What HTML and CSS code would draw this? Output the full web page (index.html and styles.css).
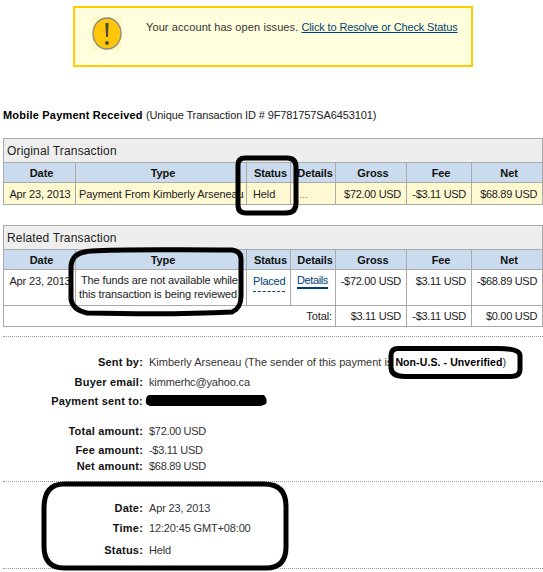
FILE: index.html
```html
<!DOCTYPE html>
<html lang="en">
<head>
<meta charset="utf-8">
<title>Mobile Payment Received</title>
<link rel="stylesheet" href="styles.css">
</head>
<body>
<div class="page">
  <div class="banner">
    <svg class="alert-icon" width="30" height="33" viewBox="0 0 30 33">
      <rect width="30" height="33" fill="#fff7c8"/>
      <ellipse cx="15" cy="16.5" rx="14" ry="15.5" fill="#ffc60a" stroke="#8a8a80" stroke-width="1.3"/>
      <path d="M13.4 6h3.2l-.7 14h-1.8z" fill="#4a4a3a"/>
      <circle cx="15" cy="26" r="1.9" fill="#4a4a3a"/>
    </svg>
    <p class="banner-text">Your account has open issues. <a href="#">Click to Resolve or Check Status</a></p>
  </div>

  <h1 class="title"><b>Mobile Payment Received</b> <span>(Unique Transaction ID # 9F781757SA6453101)</span></h1>

  <table class="txn txn-first">
    <colgroup><col class="c-date"><col class="c-type"><col class="c-status"><col class="c-details"><col class="c-gross"><col class="c-fee"><col class="c-net"></colgroup>
    <tr><th colspan="7" class="caption">Original Transaction</th></tr>
    <tr class="head"><th>Date</th><th>Type</th><th>Status</th><th>Details</th><th>Gross</th><th>Fee</th><th>Net</th></tr>
    <tr class="held">
      <td class="when">Apr 23, 2013</td><td class="left">Payment From Kimberly Arseneau</td><td class="left pad">Held</td><td class="left dots">...</td><td class="money">$72.00 USD</td><td class="money">-$3.11 USD</td><td class="money">$68.89 USD</td>
    </tr>
  </table>

  <table class="txn txn-second">
    <colgroup><col class="c-date"><col class="c-type"><col class="c-status"><col class="c-details"><col class="c-gross"><col class="c-fee"><col class="c-net"></colgroup>
    <tr><th colspan="7" class="caption">Related Transaction</th></tr>
    <tr class="head"><th>Date</th><th>Type</th><th>Status</th><th>Details</th><th>Gross</th><th>Fee</th><th>Net</th></tr>
    <tr class="related">
      <td class="when">Apr 23, 2013</td>
      <td class="left wrap">The funds are not available while<br>this transaction is being reviewed</td>
      <td class="left pad"><span class="placed">Placed</span></td>
      <td class="left link-cell"><a class="details-link" href="#">Details</a></td>
      <td class="money">-$72.00 USD</td><td class="money">$3.11 USD</td><td class="money">-$68.89 USD</td>
    </tr>
    <tr class="total">
      <td colspan="4" class="total-label">Total:</td><td class="money">$3.11 USD</td><td class="money">-$3.11 USD</td><td class="money">$0.00 USD</td>
    </tr>
  </table>

  <dl class="info info-sender">
    <dt>Sent by:</dt><dd>Kimberly Arseneau (The sender of this payment is <b>Non-U.S. - Unverified</b>)</dd>
    <dt>Buyer email:</dt><dd>kimmerhc@yahoo.ca</dd>
    <dt>Payment sent to:</dt><dd>&nbsp;</dd>
  </dl>
  <dl class="info info-amounts">
    <dt>Total amount:</dt><dd>$72.00 USD</dd>
    <dt>Fee amount:</dt><dd>-$3.11 USD</dd>
    <dt>Net amount:</dt><dd>$68.89 USD</dd>
  </dl>
  <dl class="info info-date">
    <dt>Date:</dt><dd>Apr 23, 2013</dd>
    <dt>Time:</dt><dd>12:20:45 GMT+08:00</dd>
    <dt>Status:</dt><dd>Held</dd>
  </dl>
</div>

<svg class="marks" width="543" height="572" viewBox="0 0 543 572" aria-hidden="true">
  <g fill="none" stroke="#000" stroke-width="5" stroke-linejoin="round" stroke-linecap="round">
    <path d="M245 158h42q9 0 9 9v36q0 10-10 10h-40q-8 0-8-8v-40q0-7 7-7z"/>
    <path d="M92 251c30-2 70-1 140-1q9 1 9 9v37c0 8-2 13-9 16-40 2-100 2-145 1-9-2-15-6-16-14v-33c1-10 7-14 21-15z"/>
    <path d="M398 348.500h100q22 0 22 7v14q0 7-10 7h-105q-14 0-14-9v-12q0-7 7-7z"/>
    <path d="M64 484h200q22 0 22 22v41q0 21-20 21H64q-20 0-20-22v-38q0-24 20-24z"/>
  </g>
  <path d="M149 395h115q4 4 2 9l-5 2H150q-5-1-4-6 0-4 3-5z" fill="#000"/>
</svg>
</body>
</html>
```

FILE: styles.css
```css
* { box-sizing: border-box; }
html, body { margin: 0; padding: 0; background: #fff; }
body {
  font-family: "Liberation Sans", Arial, sans-serif;
  font-size: 11px;
  color: #222;
  position: relative;
  width: 543px;
  height: 572px;
  overflow: hidden;
}
.page { padding: 6px 0 0 3px; width: 543px; }

.banner {
  margin-left: 70px;
  width: 400px;
  height: 61px;
  border: 2px solid #fc0;
  background: #ffd;
  display: flex;
  align-items: flex-start;
  padding: 9px 0 0 17px;
}
.alert-icon { flex: none; margin-right: 24px; }
.banner-text { margin: 2px 0 0; font-size: 11px; letter-spacing: .1px; color: #333; line-height: 16px; white-space: nowrap; }
.banner-text a { color: #003f72; letter-spacing: -.13px; }

.title {
  margin: 40px 0 0;
  font-size: 11px;
  font-weight: normal;
  line-height: 16px;
  height: 16px;
  letter-spacing: .2px;
  color: #000;
  white-space: nowrap;
}
.title span { color: #222; letter-spacing: -.12px; }

.txn {
  border-collapse: collapse;
  table-layout: fixed;
  width: 539px;
  border: 1px solid #aaa;
}
.txn-first { margin-top: 15px; }
.txn-second { margin-top: 20px; }
.txn th, .txn td { border: 1px solid #aaa; padding: 0; font-size: 11px; white-space: nowrap; overflow: hidden; }
.c-date { width: 72px; }
.c-type { width: 171px; }
.c-status { width: 44px; }
.c-details { width: 45px; }
.c-gross { width: 71px; }
.c-fee { width: 65px; }
.c-net { width: 71px; }

.txn th.caption {
  height: 24px;
  background: #eee;
  text-align: left;
  font-weight: normal;
  font-size: 12px;
  letter-spacing: .15px;
  padding-left: 3px;
  color: #222;
}
.head th { height: 20px; background: #c9dbed; font-weight: bold; color: #111; padding-left: 4px; letter-spacing: -.1px; }
.txn td { letter-spacing: -.1px; }
.held td { height: 22px; background: #fff9d2; }
.related td { height: 36px; vertical-align: top; padding-top: 5px; }
.total td { height: 21px; }
.txn .when { text-align: center; padding-left: 1px; letter-spacing: -.15px; }
.txn .left { text-align: left; padding-left: 3px; }
.txn .pad { padding-left: 6px; }
.txn .dots { padding-left: 8px; color: #888; }
.txn .link-cell { padding-left: 6px; padding-top: 4px; }
.txn .money { text-align: right; padding-right: 5px; letter-spacing: -.3px; }
.txn .total-label { text-align: right; padding-right: 3px; }
.txn .wrap { line-height: 14px; padding-top: 3px; padding-left: 3px; text-indent: 2px; letter-spacing: -.12px; }
.placed { display: inline-block; height: 17px; border-bottom: 1px dashed #003f72; color: #003f72; letter-spacing: -.2px; }
.details-link { display: inline-block; height: 15px; color: #003f72; text-decoration: none; border-bottom: 2px solid #003f72; letter-spacing: -.4px; }

.info {
  margin: 0;
  display: grid;
  grid-template-columns: 140px 1fr;
  column-gap: 6px;
  align-items: baseline;
  font-size: 11px;
  white-space: nowrap;
}
.info dt { font-weight: bold; text-align: right; letter-spacing: .2px; color: #111; }
.info dd { margin: 0; letter-spacing: -.15px; color: #333; }
.info dd b { color: #000; font-size: 10.5px; letter-spacing: .1px; }
.info-sender {
  margin-top: 9px;
  padding-top: 19px;
  border-top: 1px dotted #999;
  grid-auto-rows: 19.5px;
}
.info-sender dd:first-of-type { letter-spacing: 0; }
.info-amounts { margin-top: 10px; padding-bottom: 5px; border-bottom: 1px dotted #999; grid-template-rows: 19px 16px 16px; }
.info-amounts dd { letter-spacing: -.3px; }
.info-date { padding-top: 20px; padding-bottom: 8px; border-bottom: 1px dotted #999; grid-template-rows: 20px 22px 16px; }

.marks { position: absolute; left: 0; top: 0; pointer-events: none; }
```
